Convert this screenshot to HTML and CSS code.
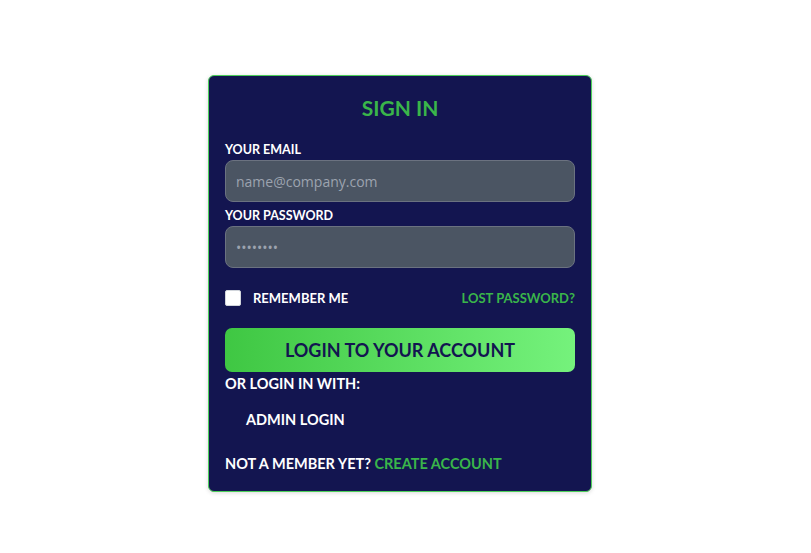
FILE: index.html
```html
<!DOCTYPE html>
<html lang="en">
<head>
  <meta charset="UTF-8">
  <meta name="viewport" content="width=device-width, initial-scale=1.0">
  <title>Sign In</title>
  <link rel="stylesheet" href="styles.css">
</head>
<body>
  <div class="card">
    <h1>SIGN IN</h1>
    <form>
      <label for="email">YOUR EMAIL</label>
      <input type="email" id="email" placeholder="name@company.com">
      <label for="password">YOUR PASSWORD</label>
      <input type="password" id="password" placeholder="••••••••">

      <div class="row">
        <label class="remember"><input type="checkbox"> REMEMBER ME</label>
        <a href="#" class="link">LOST PASSWORD?</a>
      </div>

      <button type="submit">LOGIN TO YOUR ACCOUNT</button>
    </form>

    <div class="alt">OR LOGIN IN WITH:</div>
    <div class="admin">ADMIN LOGIN</div>

    <div class="signup">NOT A MEMBER YET? <a href="#" class="link">CREATE ACCOUNT</a></div>
  </div>
</body>
</html>
```

FILE: styles.css
```css
* { margin: 0; padding: 0; box-sizing: border-box; }
body {
  font-family: 'Lato', 'Open Sans', sans-serif;
  background: #fff;
  min-height: 100vh;
  padding: 75px 11px 0 0;
}
.card {
  width: 384px;
  margin: 0 auto;
  background: #131550;
  border: 1px solid #4ccf5a;
  border-radius: 6px;
  padding: 17px 16px 18px;
  box-shadow: 0 1px 4px rgba(0,0,0,0.15);
  color: #fff;
}
h1 {
  text-align: center;
  color: #3ab54a;
  font-size: 21px;
  font-weight: 700;
  line-height: 30px;
  margin-bottom: 21px;
}
form label {
  display: block;
  font-size: 12.5px;
  font-weight: 700;
  line-height: 12px;
  margin-bottom: 4px;
}
form input[type=email], form input[type=password] {
  display: block;
  width: 100%;
  height: 42px;
  padding: 0 10px;
  background: #4b5563;
  border: 1px solid #6b7280;
  border-radius: 8px;
  color: #fff;
  font-family: 'Open Sans', sans-serif;
  font-size: 14px;
  margin-bottom: 8px;
}
form input::placeholder {
  color: #9ca3af;
}
.row {
  display: flex;
  justify-content: space-between;
  align-items: center;
  margin-top: 22px;
  margin-bottom: 22px;
}
.row .remember {
  display: flex;
  align-items: center;
  gap: 12px;
  margin: 0;
  font-size: 13px;
  line-height: 16px;
}
.remember input {
  width: 16px;
  height: 16px;
  appearance: none;
  background: #fff;
  border: 1px solid #d1d5db;
  border-radius: 2px;
}
.link {
  color: #3ab54a;
  text-decoration: none;
  font-weight: 700;
  font-size: 13px;
}
button {
  width: 100%;
  height: 44px;
  border: none;
  border-radius: 7px;
  background: linear-gradient(to right, #3fc743, #75f27c);
  color: #131550;
  font-family: inherit;
  font-size: 18px;
  font-weight: 700;
  cursor: pointer;
}
.alt {
  font-size: 14.5px;
  font-weight: 700;
  line-height: 18px;
  margin-top: 3px;
}
.admin {
  font-size: 14.5px;
  font-weight: 700;
  line-height: 18px;
  padding-left: 21px;
  margin-top: 18px;
}
.signup {
  font-size: 14.5px;
  font-weight: 700;
  line-height: 18px;
  margin-top: 26px;
}
.signup .link {
  font-size: 14.5px;
}
```
